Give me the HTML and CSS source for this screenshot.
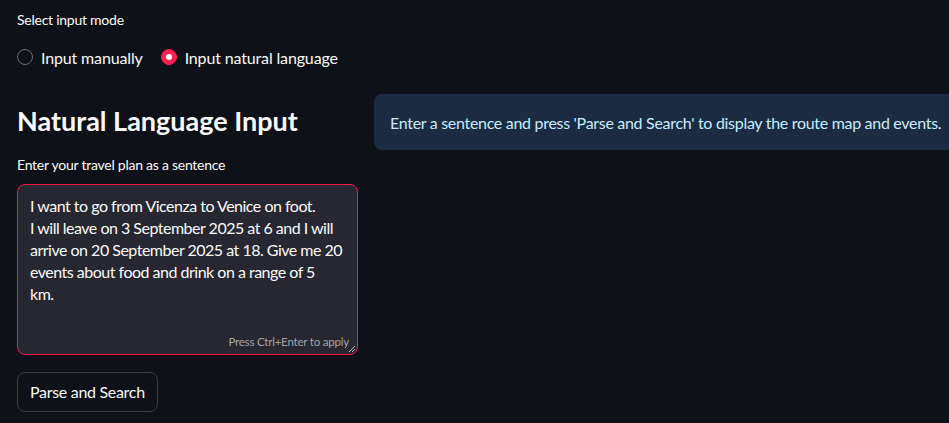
FILE: index.html
```html
<!DOCTYPE html>
<html>
<head>
<meta charset="utf-8">
<link rel="stylesheet" href="styles.css">
</head>
<body>
<div class="page">
  <div class="mode">
    <div class="label">Select input mode</div>
    <div class="radios">
      <label class="radio"><span class="dot"></span><span>Input manually</span></label>
      <label class="radio"><span class="dot on"></span><span>Input natural language</span></label>
    </div>
  </div>
  <div class="columns">
    <div class="left">
      <h3 class="title">Natural Language Input</h3>
      <div class="label">Enter your travel plan as a sentence</div>
      <div class="textarea">
        <div class="ta-text">I want to go from Vicenza to Venice on foot.<br>I will leave on 3 September 2025 at 6 and I will<br>arrive on 20 September 2025 at 18. Give me 20<br>events about food and drink on a range of 5<br>km.</div>
        <div class="hint">Press Ctrl+Enter to apply</div>
        <svg class="grip" width="8" height="8" viewBox="0 0 8 8"><path d="M7 1 L1 7 M7 4 L4 7" stroke="#bbb" stroke-width="1"/></svg>
      </div>
      <button class="btn">Parse and Search</button>
    </div>
    <div class="right">
      <div class="info">Enter a sentence and press 'Parse and Search' to display the route map and events.</div>
    </div>
  </div>
</div>
</body>
</html>
```
FILE: styles.css
```css
html, body {
  margin: 0;
  padding: 0;
  background: #0e1117;
  overflow: hidden;
}
body {
  width: 949px;
  height: 423px;
  color: #fafafa;
  font-family: "Lato", "Liberation Sans", sans-serif;
}
.page {
  padding: 10px 0 0 17px;
}
.label {
  font-size: 14px;
  line-height: 20px;
  color: #fafafa;
  letter-spacing: -0.25px;
}
.radios {
  display: flex;
  gap: 18px;
  margin-top: 16px;
  height: 22px;
  align-items: center;
}
.radio {
  display: flex;
  align-items: center;
  gap: 8px;
  font-size: 16px;
  letter-spacing: -0.15px;
}
.dot {
  width: 14px;
  height: 14px;
  border-radius: 50%;
  border: 1px solid #6b6d75;
  box-sizing: content-box;
  position: relative;
}
.dot.on {
  background: #ff1f4f;
  border-color: #ff1f4f;
}
.dot.on::after {
  content: "";
  position: absolute;
  left: 4px;
  top: 4px;
  width: 6px;
  height: 6px;
  border-radius: 50%;
  background: #fff;
}
.columns {
  display: flex;
  gap: 16px;
  margin-top: 25px;
}
.left {
  width: 341px;
  flex: none;
}
.right {
  width: 600px;
  flex: none;
  padding-top: 1px;
}
.title {
  margin: 0;
  padding-top: 10px;
  font-size: 27px;
  font-weight: 700;
  line-height: 36px;
  margin-bottom: 16px;
}
.textarea {
  margin-top: 9px;
  height: 171px;
  border: 1px solid #f3194a;
  border-radius: 8px;
  background: #262730;
  position: relative;
  padding: 10px 12px 0 12px;
  box-sizing: border-box;
}
.ta-text {
  font-size: 16px;
  line-height: 22px;
  color: #fafafa;
  letter-spacing: -0.5px;
  white-space: nowrap;
}
.hint {
  position: absolute;
  right: 8px;
  bottom: 6px;
  font-size: 11.5px;
  color: #a3a4a9;
  letter-spacing: -0.2px;
}
.grip {
  position: absolute;
  right: 1px;
  bottom: 1px;
}
.btn {
  margin-top: 17px;
  height: 40px;
  padding: 0 12px 2px;
  background: #0e1117;
  border: 1px solid #3a3c44;
  border-radius: 8px;
  color: #fafafa;
  font-family: inherit;
  font-size: 16px;
  letter-spacing: -0.3px;
}
.info {
  background: #1b2b42;
  border-radius: 8px 0 0 8px;
  height: 56px;
  box-sizing: border-box;
  padding: 0 16px;
  display: flex;
  align-items: center;
  color: #c7ebff;
  font-size: 16px;
  letter-spacing: -0.3px;
  white-space: nowrap;
}
```
